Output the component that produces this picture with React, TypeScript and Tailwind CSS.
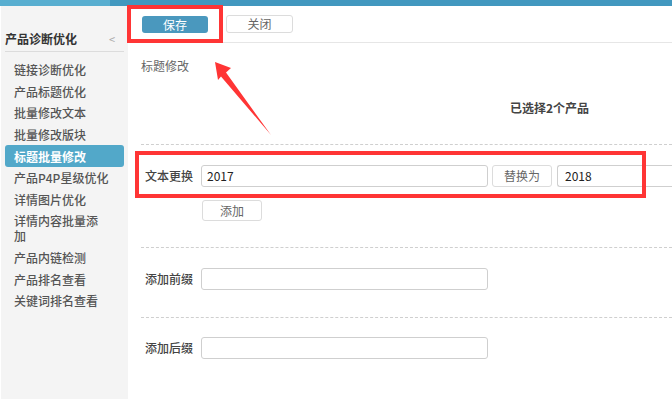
import React from 'react'

// 左侧菜单
const menu = [
  '链接诊断优化',
  '产品标题优化',
  '批量修改文本',
  '批量修改版块',
  '标题批量修改',
  '产品P4P星级优化',
  '详情图片优化',
  '详情内容批量添\n加',
  '产品内链检测',
  '产品排名查看',
  '关键词排名查看',
]

const font = { fontFamily: '"Noto Sans CJK SC", "Liberation Sans", sans-serif' }

function App() {
  return (
    <div className="w-[672px] h-[402px] overflow-hidden bg-white text-[12px] text-[#555]" style={font}>
      {/* 顶部蓝条 */}
      <div className="flex h-[6px]">
        <div className="w-[110px] bg-[#58aed0]" />
        <div className="flex-1 bg-[#4298bf]" />
      </div>
      <div className="flex h-[393px]">
        {/* 侧边栏 */}
        <div className="w-[128px] bg-[#f4f4f4] border-l border-white px-[4px]">
          <div className="mt-[25px] flex items-center justify-between border-b border-[#dcdcdc] pb-[4px]">
            <span className="font-bold text-[12px] text-[#333] leading-[16px]">产品诊断优化</span>
            <span className="text-[11px] text-[#aaa] mr-[9px] leading-[16px]">&lt;</span>
          </div>
          <div className="mt-[7px] flex flex-col">
            {menu.map((m, i) =>
              i === 4 ? (
                <div key={m} className="bg-[#52a8c9] rounded-[3px] text-white font-bold leading-[15px] py-[3.3px] pl-[9px]">
                  {m}
                </div>
              ) : (
                <div key={m} className="whitespace-pre-line leading-[15px] py-[3.3px] pl-[9px] font-medium text-[#555]">
                  {m}
                </div>
              )
            )}
          </div>
        </div>

        {/* 主区域 */}
        <div className="flex-1 relative">
          <div className="h-[37px] border-b border-[#e6e6e6] flex items-center pl-[14px] gap-[18px]">
            <button className="w-[66px] h-[17px] rounded-[3px] bg-[#4a98be] text-white text-[12px] leading-[17px]">保存</button>
            <button className="w-[67px] h-[18px] rounded-[3px] border border-[#dcdcdc] bg-white text-[#666] text-[12px] leading-[16px]">关闭</button>
          </div>

          <div className="pl-[13px]">
            <div className="mt-[14px] text-[#666] leading-[18px]">标题修改</div>
            <div className="mt-[24px] pl-[369px] font-bold text-[#444] leading-[18px]">已选择2个产品</div>

            {/* 文本更换 */}
            <div className="mt-[27px] border-t border-dashed border-[#cfcfcf] pt-[20px] pb-[26px]">
              <div className="flex items-center">
                <span className="w-[60px] pl-[4px] text-[#444] font-medium">文本更换</span>
                <div className="w-[287px] h-[22px] border border-[#cfcfcf] rounded-[3px] pl-[5px] leading-[20px] text-[#222]">2017</div>
                <button className="ml-[4px] w-[60px] h-[22px] border border-[#dcdcdc] rounded-[3px] text-[#666]">替换为</button>
                <div className="ml-[5px] flex-1 h-[22px] border border-[#cfcfcf] rounded-l-[3px] border-r-0 pl-[7px] leading-[20px] text-[#222]">2018</div>
              </div>
              <button className="mt-[13px] ml-[61px] w-[60px] h-[21px] border border-[#dcdcdc] rounded-[3px] text-[#666]">添加</button>
            </div>

            {/* 前缀 */}
            <div className="border-t border-dashed border-[#cfcfcf] h-[70px] pt-[20px] flex items-start">
              <span className="w-[60px] pl-[4px] text-[#444] font-medium leading-[22px]">添加前缀</span>
              <div className="w-[287px] h-[22px] border border-[#cfcfcf] rounded-[3px]" />
            </div>

            {/* 后缀 */}
            <div className="border-t border-dashed border-[#cfcfcf] h-[70px] pt-[19px] flex items-start">
              <span className="w-[60px] pl-[4px] text-[#444] font-medium leading-[22px]">添加后缀</span>
              <div className="w-[287px] h-[22px] border border-[#cfcfcf] rounded-[3px]" />
            </div>
          </div>

          {/* 红框标注 */}
          <div className="absolute left-[-1px] top-[-1px] w-[96px] h-[38px] border-[4px] border-[#ff3535]" />
          <div className="absolute left-[7px] top-[145px] w-[511px] h-[47px] border-[4px] border-[#ff3535]" />
        </div>
      </div>

      {/* 箭头 */}
      <svg className="absolute left-0 top-0" width="672" height="402" viewBox="0 0 672 402">
        <polygon points="215,62 231,68 226,72.5 271,135 221,76.5 218,80" fill="#ff3535" />
      </svg>
    </div>
  )
}
export default App
